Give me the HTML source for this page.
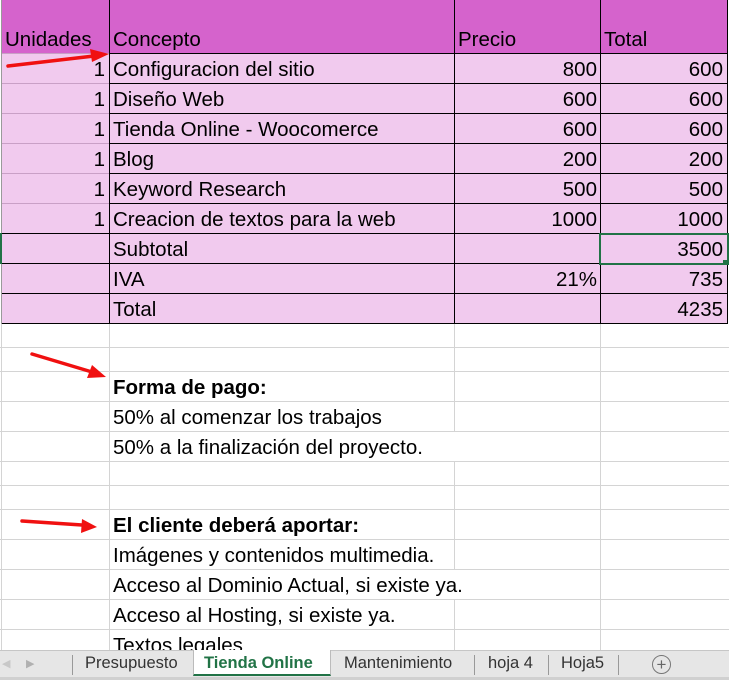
<!DOCTYPE html><html><head><meta charset="utf-8"><style>
body{margin:0;width:729px;height:680px;overflow:hidden;background:#fff;position:relative;font-family:"Liberation Sans",sans-serif;}
.t{position:absolute;font-size:20.5px;color:#000;white-space:nowrap;line-height:22px}
.hl{position:absolute;height:1px}
.vl{position:absolute;width:1px}
</style></head><body>
<div style="position:absolute;left:2px;top:0;width:725px;height:54px;background:#d563cc"></div>
<div style="position:absolute;left:2px;top:54px;width:725px;height:270px;background:#f1caee"></div>
<div class="hl" style="left:0;width:729px;top:347px;background:#d4d4d4"></div>
<div class="hl" style="left:0;width:729px;top:371px;background:#d4d4d4"></div>
<div class="hl" style="left:0;width:729px;top:401px;background:#d4d4d4"></div>
<div class="hl" style="left:0;width:729px;top:431px;background:#d4d4d4"></div>
<div class="hl" style="left:0;width:729px;top:461px;background:#d4d4d4"></div>
<div class="hl" style="left:0;width:729px;top:485px;background:#d4d4d4"></div>
<div class="hl" style="left:0;width:729px;top:509px;background:#d4d4d4"></div>
<div class="hl" style="left:0;width:729px;top:539px;background:#d4d4d4"></div>
<div class="hl" style="left:0;width:729px;top:569px;background:#d4d4d4"></div>
<div class="hl" style="left:0;width:729px;top:599px;background:#d4d4d4"></div>
<div class="hl" style="left:0;width:729px;top:629px;background:#d4d4d4"></div>
<div class="vl" style="left:1px;top:324px;height:330px;background:#d4d4d4"></div>
<div class="vl" style="left:109px;top:324px;height:330px;background:#d4d4d4"></div>
<div class="vl" style="left:454px;top:324px;height:330px;background:#d4d4d4"></div>
<div class="vl" style="left:600px;top:324px;height:330px;background:#d4d4d4"></div>
<div class="vl" style="left:109px;top:0;height:324px;background:#000"></div>
<div class="vl" style="left:454px;top:0;height:324px;background:#000"></div>
<div class="vl" style="left:600px;top:0;height:324px;background:#000"></div>
<div class="vl" style="left:727px;top:0;height:324px;background:#000"></div>
<div class="vl" style="left:1px;top:0;height:324px;background:#9a9a9a"></div>
<div class="hl" style="left:109px;width:619px;top:53px;background:#000"></div>
<div class="hl" style="left:109px;width:619px;top:83px;background:#000"></div>
<div class="hl" style="left:109px;width:619px;top:113px;background:#000"></div>
<div class="hl" style="left:109px;width:619px;top:143px;background:#000"></div>
<div class="hl" style="left:109px;width:619px;top:173px;background:#000"></div>
<div class="hl" style="left:109px;width:619px;top:203px;background:#000"></div>
<div class="hl" style="left:2px;width:726px;top:233px;background:#000"></div>
<div class="hl" style="left:109px;width:619px;top:263px;background:#000"></div>
<div class="hl" style="left:109px;width:619px;top:293px;background:#000"></div>
<div class="hl" style="left:2px;width:726px;top:323px;background:#000"></div>
<div class="hl" style="left:2px;width:107px;top:53px;background:#c9a0c6"></div>
<div class="hl" style="left:2px;width:107px;top:83px;background:#c9a0c6"></div>
<div class="hl" style="left:2px;width:107px;top:113px;background:#c9a0c6"></div>
<div class="hl" style="left:2px;width:107px;top:143px;background:#c9a0c6"></div>
<div class="hl" style="left:2px;width:107px;top:173px;background:#c9a0c6"></div>
<div class="hl" style="left:2px;width:107px;top:203px;background:#c9a0c6"></div>
<div class="hl" style="left:2px;width:107px;top:263px;background:#000"></div>
<div class="hl" style="left:2px;width:107px;top:293px;background:#000"></div>
<div style="position:absolute;left:0;top:233px;width:2px;height:31px;background:#217346"></div>
<div style="position:absolute;left:599px;top:233px;width:126px;height:28px;border:2px solid #217346"></div>
<div style="position:absolute;left:723px;top:260px;width:5px;height:5px;background:#217346"></div>
<div class="t" style="left:5px;top:29px">Unidades</div>
<div class="t" style="left:113px;top:29px">Concepto</div>
<div class="t" style="left:458px;top:29px">Precio</div>
<div class="t" style="left:604px;top:29px">Total</div>
<div class="t" style="left:0;width:105px;text-align:right;top:59px">1</div><div class="t" style="left:113px;top:59px">Configuracion del sitio</div><div class="t" style="left:454px;width:143px;text-align:right;top:59px">800</div><div class="t" style="left:600px;width:123px;text-align:right;top:59px">600</div>
<div class="t" style="left:0;width:105px;text-align:right;top:89px">1</div><div class="t" style="left:113px;top:89px">Diseño Web</div><div class="t" style="left:454px;width:143px;text-align:right;top:89px">600</div><div class="t" style="left:600px;width:123px;text-align:right;top:89px">600</div>
<div class="t" style="left:0;width:105px;text-align:right;top:119px">1</div><div class="t" style="left:113px;top:119px">Tienda Online - Woocomerce</div><div class="t" style="left:454px;width:143px;text-align:right;top:119px">600</div><div class="t" style="left:600px;width:123px;text-align:right;top:119px">600</div>
<div class="t" style="left:0;width:105px;text-align:right;top:149px">1</div><div class="t" style="left:113px;top:149px">Blog</div><div class="t" style="left:454px;width:143px;text-align:right;top:149px">200</div><div class="t" style="left:600px;width:123px;text-align:right;top:149px">200</div>
<div class="t" style="left:0;width:105px;text-align:right;top:179px">1</div><div class="t" style="left:113px;top:179px">Keyword Research</div><div class="t" style="left:454px;width:143px;text-align:right;top:179px">500</div><div class="t" style="left:600px;width:123px;text-align:right;top:179px">500</div>
<div class="t" style="left:0;width:105px;text-align:right;top:209px">1</div><div class="t" style="left:113px;top:209px">Creacion de textos para la web</div><div class="t" style="left:454px;width:143px;text-align:right;top:209px">1000</div><div class="t" style="left:600px;width:123px;text-align:right;top:209px">1000</div>
<div class="t" style="left:113px;top:239px">Subtotal</div><div class="t" style="left:600px;width:123px;text-align:right;top:239px">3500</div>
<div class="t" style="left:113px;top:269px">IVA</div><div class="t" style="left:454px;width:143px;text-align:right;top:269px">21%</div><div class="t" style="left:600px;width:123px;text-align:right;top:269px">735</div>
<div class="t" style="left:113px;top:299px">Total</div><div class="t" style="left:600px;width:123px;text-align:right;top:299px">4235</div>
<div style="position:absolute;left:110px;top:432px;width:490px;height:29px;background:#fff"></div>
<div style="position:absolute;left:110px;top:570px;width:490px;height:29px;background:#fff"></div>
<div class="t" style="left:113px;top:377px;font-weight:bold">Forma de pago:</div>
<div class="t" style="left:113px;top:407px">50% al comenzar los trabajos</div>
<div class="t" style="left:113px;top:437px">50% a la finalización del proyecto.</div>
<div class="t" style="left:113px;top:515px;font-weight:bold">El cliente deberá aportar:</div>
<div class="t" style="left:113px;top:545px">Imágenes y contenidos multimedia.</div>
<div class="t" style="left:113px;top:575px">Acceso al Dominio Actual, si existe ya.</div>
<div class="t" style="left:113px;top:605px">Acceso al Hosting, si existe ya.</div>
<div class="t" style="left:113px;top:635px">Textos legales</div>
<svg style="position:absolute;left:0;top:0" width="729" height="680">
<g stroke="#f01010" stroke-width="3.5" fill="#f01010" stroke-linecap="round">
<line x1="8" y1="66" x2="94" y2="56"/><polygon points="109,54 90,49 92,62" stroke="none"/>
<line x1="32" y1="354" x2="92" y2="372"/><polygon points="106,377 92,365 87,378" stroke="none"/>
<line x1="22" y1="521" x2="82" y2="525"/><polygon points="97,527 82,519 81,533" stroke="none"/>
</g></svg>
<div style="position:absolute;left:0;top:650px;width:729px;height:30px;background:#e6e6e6;border-top:1px solid #c6c6c6;box-sizing:border-box"></div>
<div style="position:absolute;left:0;top:677px;width:729px;height:3px;background:#d0d0d0"></div>
<div style="position:absolute;left:2px;top:657px;color:#c8c8c8;font-size:11px">◀</div>
<div style="position:absolute;left:26px;top:657px;color:#b0b0b0;font-size:11px">▶</div>
<div class="vl" style="left:72px;top:655px;height:20px;background:#999"></div>
<div class="t" style="left:85px;top:652px;font-size:16.5px;color:#333">Presupuesto</div>
<div style="position:absolute;left:193px;top:650px;width:136px;height:24px;background:#fff;border-left:1px solid #bbb;border-right:1px solid #bbb;border-bottom:2px solid #217346"></div>
<div class="t" style="left:204px;top:652px;font-size:16.5px;color:#217346;font-weight:bold">Tienda Online</div>
<div class="t" style="left:344px;top:652px;font-size:16.5px;color:#333">Mantenimiento</div>
<div class="vl" style="left:474px;top:655px;height:20px;background:#999"></div>
<div class="t" style="left:488px;top:652px;font-size:16.5px;color:#333">hoja 4</div>
<div class="vl" style="left:548px;top:655px;height:20px;background:#999"></div>
<div class="t" style="left:561px;top:652px;font-size:16.5px;color:#333">Hoja5</div>
<div class="vl" style="left:618px;top:655px;height:20px;background:#999"></div>
<div style="position:absolute;left:652px;top:655px;width:17px;height:17px;border:1px solid #777;border-radius:50%;color:#666;font-size:17px;line-height:17px;text-align:center">+</div>
</body></html>
